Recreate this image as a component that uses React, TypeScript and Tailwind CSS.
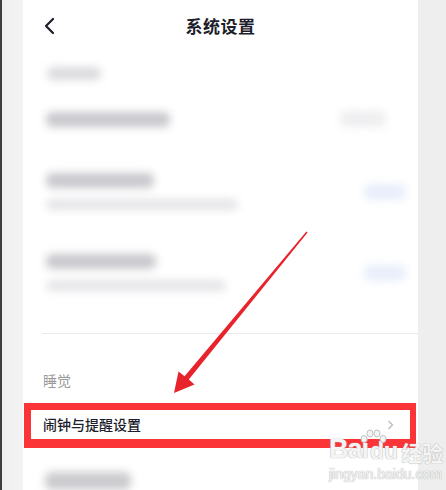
const font = { fontFamily: '"Noto Sans CJK SC", "Noto Sans", sans-serif' };

function Blob({ className }: { className: string }) {
  return <div className={`rounded-[6px] blur-[4px] ${className}`} />;
}

function BlurRow({ title, sub, right }: { title: string; sub?: string; right: string }) {
  return (
    <div className="flex items-center justify-between pl-[23px] pr-[12px]">
      <div className="flex flex-col gap-[11px]">
        <Blob className={`h-[15px] bg-[#c8c8cd] ${title}`} />
        {sub && <Blob className={`h-[11px] bg-[#e4e4e8] ${sub}`} />}
      </div>
      <Blob className={`h-[16px] ${right}`} />
    </div>
  );
}

function Arrow() {
  return (
    <svg className="absolute left-0 top-0 pointer-events-none" width="446" height="490">
      <polygon
        points="174,393 178.5,371.5 184.6,376.3 306.4,231.6 307.6,232.4 188.8,379.5 194.5,384.5"
        fill="#e8232b"
      />
    </svg>
  );
}

function Watermark() {
  return (
    <div className="absolute left-[329px] top-[436px] flex flex-col items-start leading-none text-[#f4f4f4] [text-shadow:0_0_1px_#b5b5b5,0_0_1px_#b5b5b5]">
      <div className="relative flex items-end">
        <span className="text-[27px] font-bold tracking-[-1px]" style={{ fontFamily: '"Liberation Sans", sans-serif' }}>
          Bai
        </span>
        <svg className="absolute left-[29px] top-[-7px]" width="30" height="16" viewBox="0 0 30 16">
          <g fill="#f4f4f4" stroke="#c0c0c0" strokeWidth="1">
            <ellipse cx="6" cy="10" rx="3" ry="3.5" />
            <ellipse cx="12" cy="4.5" rx="3" ry="3.5" />
            <ellipse cx="19" cy="4.5" rx="3" ry="3.5" />
            <ellipse cx="25" cy="10" rx="3" ry="3.5" />
          </g>
        </svg>
        <span className="text-[23px] font-bold ml-[2px]" style={{ fontFamily: '"Liberation Sans", sans-serif' }}>
          du
        </span>
        <span className="text-[21px] font-bold ml-[3px]" style={font}>
          经验
        </span>
      </div>
      <span className="mt-[4px] text-[14px]" style={{ fontFamily: '"Liberation Sans", sans-serif' }}>
        jingyan.baidu.com
      </span>
    </div>
  );
}

export default function App() {
  return (
    <div className="relative w-[446px] h-[490px] overflow-hidden flex bg-[#eeeeee]" style={font}>
      <div className="w-[2px] bg-[#3d3d3d]" />
      <div className="w-[21px] bg-gradient-to-r from-[#eeeeee] to-[#f4f4f4]" />
      <div className="w-[395px] bg-white flex flex-col">
        {/* header */}
        <div className="h-[52px] grid grid-cols-[40px_1fr_40px] items-center">
          <svg className="ml-[20px]" width="12" height="18" viewBox="0 0 12 18">
            <path d="M10 2 L3 9 L10 16" fill="none" stroke="#1d1d2b" strokeWidth="2.2" strokeLinecap="round" strokeLinejoin="round" />
          </svg>
          <div className="text-center text-[17px] font-semibold text-[#1d1d2b] tracking-[0.5px]">系统设置</div>
          <div />
        </div>

        {/* blurred content */}
        <div className="flex flex-col bg-white">
          <div className="pl-[24px] pt-[15px]">
            <Blob className="h-[13px] w-[54px] bg-[#dadade]" />
          </div>
          <div className="mt-[31px]">
            <BlurRow title="w-[124px]" right="w-[46px] bg-[#eeeef0] mr-[20px]" />
          </div>
          <div className="mt-[46px]">
            <BlurRow title="w-[108px]" sub="w-[192px]" right="w-[42px] bg-[#e8eefb]" />
          </div>
          <div className="mt-[44px]">
            <BlurRow title="w-[110px]" sub="w-[180px]" right="w-[42px] bg-[#e8eefb]" />
          </div>
          <div className="h-[42px]" />
        </div>
        <div className="ml-[19px] h-[1px] bg-[#ebebeb]" />

        <div className="pl-[20px] pt-[37px] text-[14px] leading-[18px] text-[#9a9a9a]">睡觉</div>

        {/* highlighted row */}
        <div className="mt-[14px] ml-[1px] mr-[2px] h-[45px] border-[#fb3437] border-t-[7px] border-b-[9px] border-l-[7px] border-r-[6px] flex items-center justify-between pl-[12px] pr-[16px]">
          <span className="text-[14px] font-medium text-[#1d1d2b]">闹钟与提醒设置</span>
          <svg width="7" height="10" viewBox="0 0 7 10">
            <path d="M1.5 1 L5.5 5 L1.5 9" fill="none" stroke="#b8b8b8" strokeWidth="1.2" />
          </svg>
        </div>

        <div className="pl-[22px] pt-[24px]">
          <Blob className="h-[18px] w-[86px] bg-[#cbcbcf]" />
        </div>
      </div>
      <div className="flex-1 bg-[#eeeeee]" />

      <Arrow />
      <Watermark />
    </div>
  );
}
